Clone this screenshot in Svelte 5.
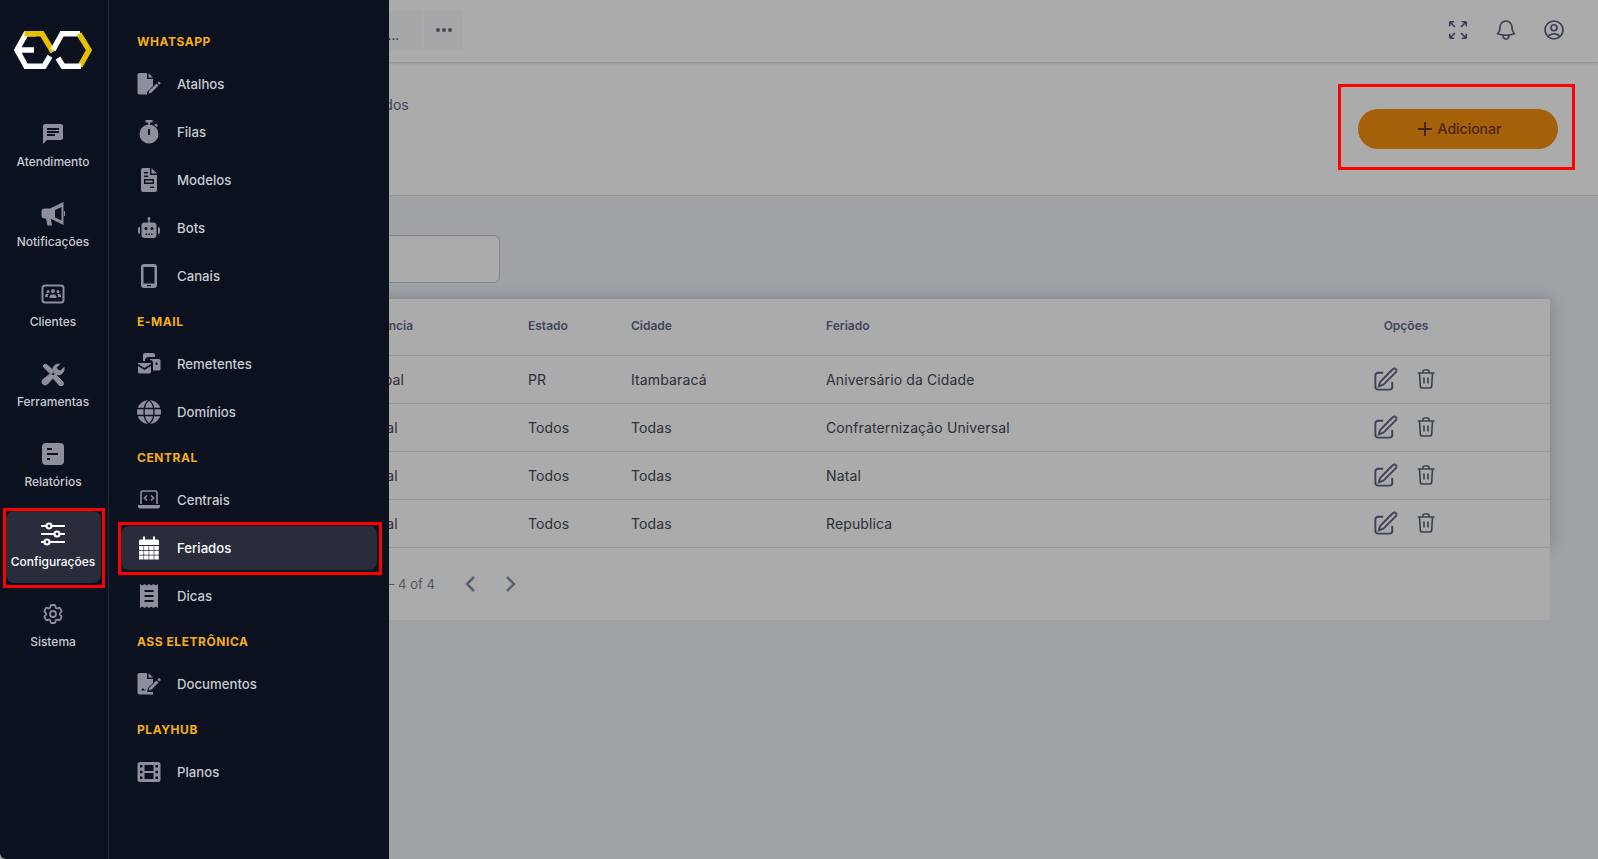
<script>
  // d = filled shape (evenodd), s = stroked shape, w = stroke width
  const calendarCells = () => {
    let out = '';
    for (let r = 0; r < 3; r++) {
      for (let c = 0; c < 4; c++) {
        out += `M${2 + c * 5.1} ${10 + r * 4.7}h4.500v4.100h-4.500z`;
      }
    }
    return out;
  };

  const toolsPath = 'M2 4 4 2l3 1.500 6 6-3 3-6-6zM14 12l8 8a2.500 2.500 0 0 1-3.500 3.500L11 15zM9.500 11.500 13 15l-6.500 7A3 3 0 0 1 2 17.500zM23 5.500A6 6 0 0 1 15 12.500l-3-3A6 6 0 0 1 18.500 2L15.500 5.500l1 2.500 3 1z';

  const icons = {
    chat: { d: 'M20 2H4c-1.1 0-1.99.9-1.99 2L2 22l4-4h14c1.1 0 2-.9 2-2V4c0-1.1-.9-2-2-2zM6 9h12v2H6V9zm8 5H6v-2h8v2zm4-6H6V6h12v2z' },
    horn: { d: 'M22.500 0 9 6.500H3.500a3 3 0 0 0-3 3v4a3 3 0 0 0 3 3H5l1.500 7h4.500l-1.200-6.800L22.500 23zM20.500 5l-6.500 3v7.500l6.500 3zM23 9h1v5h-1z' },
    people: {
      s: 'M4 3.500h16a2.500 2.500 0 0 1 2.500 2.500v12a2.500 2.500 0 0 1-2.500 2.500H4A2.500 2.500 0 0 1 1.500 18V6A2.500 2.500 0 0 1 4 3.500z',
      w: 2,
      d: 'M12 7a2 2 0 1 1 0 4 2 2 0 0 1 0-4zM7 8a1.500 1.500 0 1 1 0 3 1.500 1.500 0 0 1 0-3zM17 8a1.500 1.500 0 1 1 0 3 1.500 1.500 0 0 1 0-3zM8.500 16v-1.500a2.500 2.500 0 0 1 2.500-2h2a2.500 2.500 0 0 1 2.500 2V16zM4 15v-1.500A2 2 0 0 1 6 12h1.500a3 3 0 0 0-.5 3zM20 15v-1.500A2 2 0 0 0 18 12h-1.500a3 3 0 0 1 .5 3z'
    },
    tools: { d: toolsPath, s: toolsPath, w: 1 },
    report: { d: 'M5 1h14a4 4 0 0 1 4 4v14a4 4 0 0 1-4 4H5a4 4 0 0 1-4-4V5a4 4 0 0 1 4-4zM6 6h5v2H6zM6 11h11v2H6zM6 16h3v2H6z' },
    sliders: { s: 'M0 4h5M11 4h13M0 12h13M19 12h5M0 20h3M9 20h15M8 1.500a2.500 2.500 0 1 1 0 5 2.500 2.500 0 0 1 0-5zM16 9.500a2.500 2.500 0 1 1 0 5 2.500 2.500 0 0 1 0-5zM6 17.500a2.500 2.500 0 1 1 0 5 2.500 2.500 0 0 1 0-5z', w: 2.2 },
    gear: {
      s: 'M9.594 3.94c.09-.542.56-.94 1.11-.94h2.593c.55 0 1.02.398 1.11.94l.213 1.281c.063.374.313.686.645.87.074.04.147.083.22.127.325.196.72.257 1.075.124l1.217-.456a1.125 1.125 0 0 1 1.37.49l1.296 2.247a1.125 1.125 0 0 1-.26 1.431l-1.003.827c-.293.241-.438.613-.43.992a7.723 7.723 0 0 1 0 .255c-.008.378.137.75.43.991l1.004.827c.424.35.534.955.26 1.43l-1.298 2.247a1.125 1.125 0 0 1-1.369.491l-1.217-.456c-.355-.133-.75-.072-1.076.124a6.47 6.47 0 0 1-.22.128c-.331.183-.581.495-.644.869l-.213 1.281c-.09.543-.56.94-1.11.94h-2.594c-.55 0-1.019-.398-1.11-.94l-.213-1.281c-.062-.374-.312-.686-.644-.87a6.52 6.52 0 0 1-.22-.127c-.325-.196-.72-.257-1.076-.124l-1.217.456a1.125 1.125 0 0 1-1.369-.49l-1.297-2.247a1.125 1.125 0 0 1 .26-1.431l1.004-.827c.292-.24.437-.613.43-.991a6.932 6.932 0 0 1 0-.255c.007-.38-.138-.751-.43-.992l-1.004-.827a1.125 1.125 0 0 1-.26-1.43l1.297-2.247a1.125 1.125 0 0 1 1.37-.491l1.216.456c.356.133.751.072 1.076-.124.072-.044.146-.086.22-.128.332-.183.582-.495.644-.869l.214-1.28ZM15 12a3 3 0 1 1-6 0 3 3 0 0 1 6 0Z',
      w: 1.800
    },
    filePen: { d: 'M2.500 1H10v6h6v7l-6 6v2.500H2.500A2 2 0 0 1 .5 20.500V3a2 2 0 0 1 2-2zM11.500 1 16 5.500h-4.500zM22 9.500l1.800 1.800-1.500 1.500-1.800-1.800zM19.500 11.500l2 2-7.200 7.300-2.800.7.700-2.800z' },
    watch: { d: 'M8.500 0h7v2.500h-2.500v2.100h-2V2.500H8.500zM12 4.500a9.500 9.500 0 1 0 0 19 9.500 9.500 0 0 0 0-19zM11 9h2v6h-2zM19 3.500l2 2-1.500 1.500-2-2z' },
    doc: { d: 'M6 0h7v7h7v15a2 2 0 0 1-2 2H6a2 2 0 0 1-2-2V2a2 2 0 0 1 2-2zM14.500 0 20 5.500h-5.500zM7 4h4v1.500H7zM7 7.500h4V9H7zM7 11h10v5H7zM8.500 12.500v2h7v-2zM13 18.500h4V20h-4z' },
    robot: { d: 'M11.200 4a1.500 1.500 0 1 1 1.600 0V6.500h3.700a3 3 0 0 1 3 3V19a3 3 0 0 1-3 3h-9a3 3 0 0 1-3-3V9.500a3 3 0 0 1 3-3h3.700zM9 11a1.500 1.500 0 1 0 0 3 1.500 1.500 0 0 0 0-3zM15 11a1.500 1.500 0 1 0 0 3 1.500 1.500 0 0 0 0-3zM8.500 17.500V19H10v-1.500zM11.200 17.500V19h1.600v-1.500zM14 17.500V19h1.500v-1.500zM3 11v7a2 2 0 0 1-2-2v-3a2 2 0 0 1 2-2zM21 11a2 2 0 0 1 2 2v3a2 2 0 0 1-2 2z' },
    phone: { d: 'M7 0h10a3 3 0 0 1 3 3v18a3 3 0 0 1-3 3H7a3 3 0 0 1-3-3V3a3 3 0 0 1 3-3zM6.500 3v16.500h11V3zM10 21v1.200h4V21z' },
    mail: { d: 'M6 3a2 2 0 0 1 2-2h8a2 2 0 0 1 2 2v2h-6a4 4 0 0 0-4 4H6zM13 7h9a1.500 1.500 0 0 1 1.500 1.500V17a1.500 1.500 0 0 1-1.500 1.500h-6V11a3 3 0 0 0-3-3zM18.500 10.500v2.500h2v-2.500zM1 11h13v1l-6.500 4L1 12zM1 14l6.500 4 6.500-4v6a1.500 1.500 0 0 1-1.500 1.500h-10A1.500 1.500 0 0 1 1 20z' },
    globe: {
      d: 'M12 0a12 12 0 1 1 0 24 12 12 0 0 1 0-24z',
      cut: 'M0 8.500h24M0 15.500h24M12 0C8 3 7 8 7 12s1 9 5 12M12 0c4 3 5 8 5 12s-1 9-5 12',
      w: 1.300
    },
    laptop: {
      s: 'M4 16V4.500A1.500 1.500 0 0 1 5.500 3h13A1.500 1.500 0 0 1 20 4.500V16M10 7.500 7.500 10l2.500 2.500M14 7.500l2.500 2.500-2.500 2.500',
      w: 1.600,
      d: 'M1 17h22v1.500a2 2 0 0 1-2 2H3a2 2 0 0 1-2-2z'
    },
    calendar: { d: 'M6 .5h2v3H6zM16 .5h2v3h-2zM3.500 3.500h17A1.500 1.500 0 0 1 22 5v4H2V5a1.500 1.500 0 0 1 1.500-1.500z' + calendarCells() },
    receipt: { d: 'M3 0l2.250 1.500L7.500 0l2.250 1.500L12 0l2.250 1.500L16.500 0l2.250 1.500L21 0v24l-2.250-1.500L16.500 24l-2.250-1.500L12 24l-2.250-1.500L7.500 24l-2.250-1.500L3 24zM7.500 6v2h9V6zM7.500 11v2h9v-2zM7.500 16v2h9v-2z' },
    fileSign: { d: 'M2.500 1H10v6h6v4l-5 5-1 4h6v2.500H2.500A2 2 0 0 1 .5 20.500V3a2 2 0 0 1 2-2zM11.500 1 16 5.500h-4.500zM4 18.500l2-2.500 1.500 2 1-1v1.500zM21.500 6.500a1.500 1.500 0 0 1 2 2l-1 1-2-2zM19.500 8.500l2 2-7 7-3 1 1-3z' },
    film: { d: 'M3 2h18a2.500 2.500 0 0 1 2.500 2.500v15A2.500 2.500 0 0 1 21 22H3A2.500 2.500 0 0 1 .5 19.500v-15A2.500 2.500 0 0 1 3 2zM3 5v2.500h2.500V5zM3 10.750v2.500h2.500v-2.500zM3 16.500V19h2.500v-2.500zM18.500 5v2.500H21V5zM18.500 10.750v2.500H21v-2.500zM18.500 16.500V19H21v-2.500zM7.500 5v6h9V5zM7.500 13v6h9v-6z' }
  };

  const railItems = [
    { label: 'Atendimento', icon: 'chat' },
    { label: 'Notificações', icon: 'horn' },
    { label: 'Clientes', icon: 'people' },
    { label: 'Ferramentas', icon: 'tools' },
    { label: 'Relatórios', icon: 'report' },
    { label: 'Configurações', icon: 'sliders', active: true },
    { label: 'Sistema', icon: 'gear' }
  ];

  const menu = [
    { title: 'WHATSAPP', items: [
      { label: 'Atalhos', icon: 'filePen' },
      { label: 'Filas', icon: 'watch' },
      { label: 'Modelos', icon: 'doc' },
      { label: 'Bots', icon: 'robot' },
      { label: 'Canais', icon: 'phone' }
    ] },
    { title: 'E-MAIL', items: [
      { label: 'Remetentes', icon: 'mail' },
      { label: 'Domínios', icon: 'globe' }
    ] },
    { title: 'CENTRAL', items: [
      { label: 'Centrais', icon: 'laptop' },
      { label: 'Feriados', icon: 'calendar', active: true },
      { label: 'Dicas', icon: 'receipt' }
    ] },
    { title: 'ASS ELETRÔNICA', items: [{ label: 'Documentos', icon: 'fileSign' }] },
    { title: 'PLAYHUB', items: [{ label: 'Planos', icon: 'film' }] }
  ];

  const rows = [
    { scope: 'Municipal', state: 'PR', city: 'Itambaracá', name: 'Aniversário da Cidade' },
    { scope: 'Nacional', state: 'Todos', city: 'Todas', name: 'Confraternização Universal' },
    { scope: 'Nacional', state: 'Todos', city: 'Todas', name: 'Natal' },
    { scope: 'Nacional', state: 'Todos', city: 'Todas', name: 'Republica' }
  ];
</script>

{#snippet icon(name)}
  <svg class="ico" viewBox="0 0 24 24" aria-hidden="true">
    {#if icons[name].d}
      <path d={icons[name].d} fill="currentColor" fill-rule="evenodd" />
    {/if}
    {#if icons[name].s}
      <path d={icons[name].s} fill="none" stroke="currentColor" stroke-width={icons[name].w} />
    {/if}
    {#if icons[name].cut}
      <path d={icons[name].cut} fill="none" stroke="#0b111f" stroke-width={icons[name].w} />
    {/if}
  </svg>
{/snippet}

<div class="shell">
  <aside class="rail">
    <div class="logo">
      <svg viewBox="0 0 78 38" width="78" height="38" fill="none" stroke-width="5.500">
        <path d="M22 2.750h-10L3 19l9 16.250h18l6-10M3 19h17" stroke="#fff" />
        <path d="M10.500 2.750H28L39 21" stroke="#e5c100" />
        <path d="M39 19 48 2.750h18" stroke="#fff" />
        <path d="M65 2.750 75 19 66 35.250" stroke="#e5c100" />
        <path d="M67 35.250H49l-5-8.250" stroke="#fff" />
      </svg>
    </div>
    <nav class="rail-nav">
      {#each railItems as item}
        <div class="rail-item" class:active={item.active}>
          {@render icon(item.icon)}
          <span>{item.label}</span>
        </div>
      {/each}
    </nav>
  </aside>

  <main class="main">
    <header class="topbar">
      <div class="tab">Feriados ...</div>
      <div class="tab-more">
        <svg viewBox="0 0 16 4" width="16" height="4"><circle cx="2" cy="2" r="2" /><circle cx="8" cy="2" r="2" /><circle cx="14" cy="2" r="2" /></svg>
      </div>
      <div class="top-icons">
        <svg viewBox="0 0 24 24"><path d="M3.750 3.750v4.500m0-4.500h4.500m-4.500 0L9 9M3.750 20.250v-4.500m0 4.500h4.500m-4.500 0L9 15M20.250 3.750h-4.500m4.500 0v4.500m0-4.500L15 9m5.250 11.250h-4.500m4.500 0v-4.500m0 4.500L15 15" /></svg>
        <svg viewBox="0 0 24 24"><path d="M14.857 17.082a23.848 23.848 0 0 0 5.454-1.31A8.967 8.967 0 0 1 18 9.750V9A6 6 0 0 0 6 9v.750a8.967 8.967 0 0 1-2.312 6.022c1.733.640 3.560 1.085 5.455 1.310m5.714 0a24.255 24.255 0 0 1-5.714 0m5.714 0a3 3 0 1 1-5.714 0" /></svg>
        <svg viewBox="0 0 24 24"><path d="M17.982 18.725A7.488 7.488 0 0 0 12 15.750a7.488 7.488 0 0 0-5.982 2.975m11.963 0a9 9 0 1 0-11.963 0m11.963 0A8.966 8.966 0 0 1 12 21a8.966 8.966 0 0 1-5.982-2.275M15 9.750a3 3 0 1 1-6 0 3 3 0 0 1 6 0Z" /></svg>
      </div>
    </header>

    <section class="page-head">
      <p class="subtitle">Lista de feriados cadastrados</p>
      <button class="add">
        <svg viewBox="0 0 16 16" width="16" height="16"><path d="M8 1v14M1 8h14" /></svg>
        Adicionar
      </button>
    </section>

    <section class="content">
      <input class="search" type="text" />
      <div class="table-wrap">
        <table>
          <colgroup>
            <col style="width:194px" /><col style="width:189px" /><col style="width:103px" /><col style="width:195px" /><col style="width:516px" /><col style="width:160px" /><col />
          </colgroup>
          <thead>
            <tr><th></th><th>Abrangência</th><th>Estado</th><th>Cidade</th><th>Feriado</th><th class="center">Opções</th><th></th></tr>
          </thead>
          <tbody>
            {#each rows as row}
              <tr>
                <td></td>
                <td>{row.scope}</td>
                <td>{row.state}</td>
                <td>{row.city}</td>
                <td>{row.name}</td>
                <td class="center">
                  <div class="actions">
                    <svg viewBox="0 0 24 24" width="27" height="27"><path d="m16.862 4.487 1.687-1.688a1.875 1.875 0 1 1 2.652 2.652L10.582 16.070a4.500 4.500 0 0 1-1.897 1.130L6 18l.8-2.685a4.500 4.500 0 0 1 1.130-1.897l8.932-8.931ZM18 14v4.750A2.250 2.250 0 0 1 15.750 21H5.250A2.250 2.250 0 0 1 3 18.750V8.250A2.250 2.250 0 0 1 5.250 6H10" /></svg>
                    <svg viewBox="0 0 24 24" width="24" height="24"><path d="M3.500 6h17M9 6V4.500A1.500 1.500 0 0 1 10.500 3h3A1.500 1.500 0 0 1 15 4.500V6M5.500 6l.8 13a2 2 0 0 0 2 2h7.400a2 2 0 0 0 2-2L18.500 6M10 10.500v6M14 10.500v6" /></svg>
                  </div>
                </td>
                <td></td>
              </tr>
            {/each}
          </tbody>
        </table>
      </div>
      <div class="pager">
        <span>1 – 4 of 4</span>
        <svg viewBox="0 0 24 24" width="24" height="24"><path d="M15 5l-7 7 7 7" /></svg>
        <svg viewBox="0 0 24 24" width="24" height="24"><path d="M9 5l7 7-7 7" /></svg>
      </div>
    </section>

    <div class="scrim"></div>
  </main>

  <aside class="flyout">
    {#each menu as group}
      <h4>{group.title}</h4>
      {#each group.items as item}
        <div class="fly-item" class:active={item.active}>
          {@render icon(item.icon)}
          <span>{item.label}</span>
        </div>
      {/each}
    {/each}
  </aside>

  <div class="mark-add"></div>
</div>

<style>
  :global(body) {
    margin: 0;
    font-family: Inter, "Liberation Sans", sans-serif;
    overflow: hidden;
  }

  .shell {
    position: relative;
    display: flex;
    height: 859px;
    background: #9fa3a6;
    overflow: hidden;
  }

  .ico {
    width: 24px;
    height: 24px;
    flex: none;
    display: block;
  }

  /* icon rail */
  .rail {
    width: 108px;
    flex: none;
    background: #0b111f;
    border-right: 1px solid #262b3a;
    border-bottom-left-radius: 6px;
    position: relative;
    z-index: 3;
  }

  .logo {
    height: 111px;
    padding: 31px 0 0 14px;
    box-sizing: border-box;
  }

  .logo svg {
    display: block;
  }

  .rail-nav {
    display: flex;
    flex-direction: column;
    gap: 8px;
    padding: 0 7px 0 6px;
  }

  .rail-item {
    position: relative;
    height: 72px;
    box-sizing: border-box;
    padding: 11px 1px 0 0;
    border-radius: 8px;
    display: flex;
    flex-direction: column;
    align-items: center;
    color: #8e8f9b;
  }

  .rail-item span {
    margin-top: 7px;
    font-size: 12px;
    line-height: 18px;
    font-weight: 500;
    color: #c9cad1;
    white-space: nowrap;
  }

  .rail-item.active {
    background: #282c3b;
    color: #fff;
  }

  .rail-item.active span {
    color: #fff;
  }

  .rail-item.active::after {
    content: "";
    position: absolute;
    inset: -3px -4px -5px -3px;
    border: 3px solid #f00;
  }

  /* submenu over the page */
  .flyout {
    position: absolute;
    left: 109px;
    top: 0;
    bottom: 0;
    width: 256px;
    padding: 22px 12px 0;
    background: #0b111f;
    z-index: 3;
  }

  .flyout h4 {
    margin: 0;
    height: 38px;
    padding: 0 0 2px 16px;
    display: flex;
    align-items: center;
    font-size: 12px;
    font-weight: 700;
    letter-spacing: 0.55px;
    color: #f5ae14;
  }

  .fly-item {
    position: relative;
    height: 44px;
    margin-bottom: 4px;
    padding-left: 16px;
    display: flex;
    align-items: center;
    gap: 16px;
    border-radius: 8px;
    color: #8e8f9b;
  }

  .fly-item span {
    font-size: 13.200px;
    font-weight: 500;
    color: #c9cad1;
  }

  .fly-item.active {
    background: #282c3b;
    color: #fff;
  }

  .fly-item.active span {
    color: #fff;
  }

  .fly-item.active::after {
    content: "";
    position: absolute;
    inset: -4px -5px -5px -3px;
    border: 3px solid #f00;
  }

  /* page behind the dark layer */
  .main {
    position: relative;
    flex: 1;
    min-width: 0;
    background: #edf3f8;
  }

  .scrim {
    position: absolute;
    inset: 0;
    background: rgba(0, 0, 0, 0.33);
  }

  .topbar {
    height: 62px;
    background: #fff;
    border-bottom: 1px solid #dde1e6;
    display: flex;
    align-items: flex-start;
    padding: 0 32px 0 140px;
    box-shadow: 0 1px 2px rgba(0, 0, 0, 0.08);
    position: relative;
  }

  .tab {
    margin-top: 10px;
    width: 173px;
    height: 40px;
    box-sizing: border-box;
    padding: 16px 23px 0 0;
    text-align: right;
    font-size: 13px;
    line-height: 18px;
    color: #444b5c;
    background: #f7f9fb;
    white-space: nowrap;
    overflow: hidden;
  }

  .tab-more {
    margin: 10px 0 0 2px;
    width: 39px;
    height: 40px;
    background: #f7f9fb;
    display: flex;
    align-items: center;
    justify-content: center;
    fill: #606c87;
  }

  .top-icons {
    margin-left: auto;
    display: flex;
    gap: 24px;
    padding-top: 18px;
  }

  .top-icons svg {
    width: 24px;
    height: 24px;
    fill: none;
    stroke: #55607a;
    stroke-width: 1.700;
  }

  .page-head {
    height: 133px;
    box-sizing: border-box;
    background: #fff;
    border-bottom: 1px solid #dde1e6;
    display: flex;
    justify-content: space-between;
    padding: 46px 40px 0 104px;
  }

  .subtitle {
    margin: -14px 0 0;
    font-size: 14px;
    line-height: 20px;
    color: #5f6a85;
  }

  .add {
    width: 200px;
    height: 40px;
    border: 0;
    border-radius: 20px;
    padding: 0 0 1px 2px;
    background: #f78f0f;
    color: #703912;
    font: 500 14px Inter, "Liberation Sans", sans-serif;
    display: flex;
    align-items: center;
    justify-content: center;
    gap: 5px;
  }

  .add svg {
    fill: none;
    stroke: currentColor;
    stroke-width: 2;
  }

  .mark-add {
    position: absolute;
    left: 1338px;
    top: 84px;
    width: 237px;
    height: 86px;
    box-sizing: border-box;
    border: 3px solid #f00;
    z-index: 4;
  }

  .content {
    padding: 39px 48px 0 20px;
  }

  .search {
    display: block;
    width: 371px;
    height: 48px;
    box-sizing: border-box;
    border: 1px solid #bcc4dc;
    border-radius: 6px;
    background: #fff;
  }

  .table-wrap {
    margin-top: 16px;
    background: #fff;
    box-shadow: 0 0 14px rgba(50, 60, 80, 0.3);
  }

  table {
    width: 100%;
    table-layout: fixed;
    border-collapse: collapse;
  }

  th {
    height: 56px;
    padding: 0 16px 2px;
    box-sizing: border-box;
    text-align: left;
    font-size: 12px;
    font-weight: 600;
    color: #606c87;
    border-bottom: 1px solid #e0e3e8;
    white-space: nowrap;
  }

  td {
    height: 47px;
    padding: 0 16px;
    font-size: 14px;
    letter-spacing: 0.12px;
    color: #434857;
    border-bottom: 1px solid #e0e3e8;
    white-space: nowrap;
  }

  .center {
    text-align: center;
  }

  .actions {
    display: flex;
    justify-content: center;
    align-items: center;
    gap: 15px;
    padding-right: 2px;
  }

  .actions svg {
    fill: none;
    stroke: #5a6580;
    stroke-width: 1.700;
  }

  .pager {
    position: relative;
    height: 72px;
    background: #fff;
    display: flex;
    align-items: center;
    padding-left: 250px;
    font-size: 13px;
    color: #7c8598;
  }

  .pager span {
    margin-right: 24px;
  }

  .pager svg {
    margin-right: 15px;
    fill: none;
    stroke: #8593ad;
    stroke-width: 2.500;
  }
</style>
